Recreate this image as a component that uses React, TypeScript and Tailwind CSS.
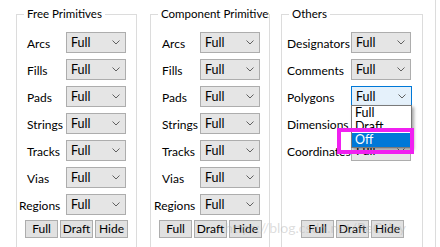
import React from "react"

type Row = { label: string; pl: number; focused?: boolean }

const font = { fontFamily: 'Lato, "Noto Sans", "Liberation Sans", sans-serif' }

function Chevron() {
  return (
    <svg width="8" height="5" viewBox="0 0 8 5" className="shrink-0">
      <path d="M0.5 0.5 L4 4 L7.5 0.5" fill="none" stroke="#606060" strokeWidth="1" />
    </svg>
  )
}

function Select({ focused }: { focused?: boolean }) {
  return (
    <div
      className={
        focused
          ? "flex h-[21px] w-[61px] shrink-0 items-center justify-between border border-[#0078d7] bg-[#e5f1fb] pl-[4px] pr-[5px]"
          : "flex h-[21px] w-[60px] shrink-0 items-center justify-between border border-[#adadad] bg-[#e5e5e5] pl-[4px] pr-[5px]"
      }
    >
      <span className="text-[12.5px] leading-[19px]">Full</span>
      <Chevron />
    </div>
  )
}

function Buttons({ ml }: { ml: number }) {
  return (
    <div className="mt-[5px] flex gap-[2px]" style={{ marginLeft: ml }}>
      {["Full", "Draft", "Hide"].map((b) => (
        <div
          key={b}
          className="flex h-[18px] w-[33px] items-center justify-center border border-[#adadad] bg-[#e1e1e1] leading-[16px]"
        >
          {b}
        </div>
      ))}
    </div>
  )
}

function Group({
  title,
  width,
  labelW,
  rows,
  btnMl,
}: {
  title: string
  width: number
  labelW: number
  rows: Row[]
  btnMl: number
}) {
  return (
    <fieldset
      className="h-[270px] min-w-0 shrink-0 border border-[#dcdcdc]"
      style={{ width }}
    >
      <legend
        className="ml-[7px] overflow-hidden whitespace-nowrap px-[3px] text-[11.5px] leading-[16px]"
        style={{ maxWidth: width - 9 }}
      >
        {title}
      </legend>
      <div className="flex h-[193px] flex-col gap-[6px] pt-[10px]">
        {rows.map((r) => (
          <div key={r.label} className="flex h-[21px] items-center">
            <span
              className="shrink-0 whitespace-nowrap pt-[2px] leading-[16px]"
              style={{ width: labelW, paddingLeft: r.pl }}
            >
              {r.label}
            </span>
            <Select focused={r.focused} />
          </div>
        ))}
      </div>
      <Buttons ml={btnMl} />
    </fieldset>
  )
}

const prim = (pl: number, regPl: number): Row[] => [
  { label: "Arcs", pl },
  { label: "Fills", pl },
  { label: "Pads", pl },
  { label: "Strings", pl },
  { label: "Tracks", pl },
  { label: "Vias", pl },
  { label: "Regions", pl: regPl },
]

export default function App() {
  return (
    <div
      className="relative h-[247px] w-[440px] overflow-hidden bg-white text-[12px] text-black"
      style={font}
    >
      <div className="flex pl-[16px] pt-[6px]">
        <Group title="Free Primitives" width={121} labelW={49} rows={prim(10, 2)} btnMl={8} />
        <div className="ml-[13px]">
          <Group title="Component Primitives" width={120} labelW={49} rows={prim(11, 3)} btnMl={8} />
        </div>
        <div className="ml-[11px]">
          <Group
            title="Others"
            width={142}
            labelW={69}
            rows={[
              { label: "Designators", pl: 5 },
              { label: "Comments", pl: 5 },
              { label: "Polygons", pl: 5, focused: true },
              { label: "Dimensions", pl: 5 },
              { label: "Coordinates", pl: 5 },
            ]}
            btnMl={19}
          />
        </div>
        <div className="ml-[12px] -mt-[6px] h-[253px] border-l border-[#dcdcdc]" />
      </div>

      {/* open dropdown list */}
      <div className="absolute left-[351px] top-[105px] flex w-[61px] flex-col border border-[#7a7a7a] bg-white text-[12.5px] shadow-[2px_2px_3px_rgba(0,0,0,0.35)]">
        <div className="h-[14px] pl-[3px] leading-[14px]">Full</div>
        <div className="h-[13px] pl-[3px] leading-[13px]">Draft</div>
        <div className="h-[14px] bg-[#0078d7] pl-[3px] leading-[14px] text-white">Off</div>
      </div>

      {/* highlight box */}
      <div className="absolute left-[337px] top-[128px] h-[26px] w-[77px] border-4 border-[#f020f0]" />

      {/* watermark */}
      <div className="absolute left-[225px] top-[219px] whitespace-nowrap text-[14px] leading-[18px] text-[rgba(180,180,180,0.45)]">
        https://blog.csdn.net/ReCclay
      </div>
    </div>
  )
}
